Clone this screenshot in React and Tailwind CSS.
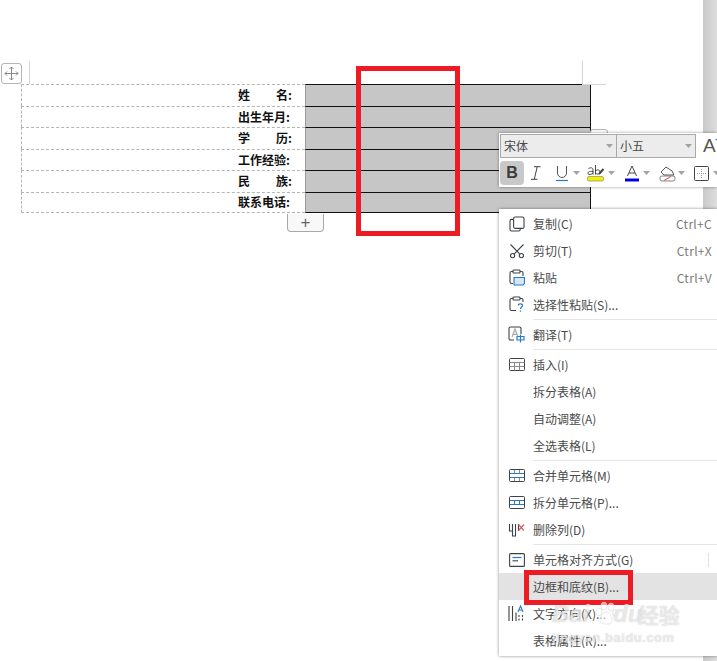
const cjk = "font-['Noto_Sans_CJK_SC','Noto_Sans',sans-serif]"

const rows = [
  ['姓', '名:', true],
  ['出生年月:', '', false],
  ['学', '历:', true],
  ['工作经验:', '', false],
  ['民', '族:', true],
  ['联系电话:', '', false],
]

const ICON = { fill: 'none', stroke: '#3d4248', strokeWidth: 1.1 }

function Arrow() {
  return (
    <svg width="7" height="4" viewBox="0 0 7 4" className="shrink-0">
      <path d="M0 0h7L3.5 4z" fill="#a3a3a3" />
    </svg>
  )
}

function CopyIcon() {
  return (
    <svg width="16" height="16" viewBox="0 0 16 16" {...ICON}>
      <rect x="4.6" y="1" width="10.4" height="11.4" rx="1.5" />
      <path d="M4.6 3.4H2.5A1.5 1.5 0 0 0 1 4.9v8.6A1.5 1.5 0 0 0 2.5 15h7.2a1.5 1.5 0 0 0 1.5-1.5v-1.1" />
    </svg>
  )
}

function CutIcon() {
  return (
    <svg width="16" height="16" viewBox="0 0 16 16" {...ICON}>
      <path d="M1.5 1.500l9.200 9.400M14.500 1.500L5.300 10.900" />
      <circle cx="3.600" cy="12.600" r="2.100" />
      <circle cx="12.400" cy="12.600" r="2.100" />
    </svg>
  )
}

function PasteIcon() {
  return (
    <svg width="16" height="17" viewBox="0 0 16 17">
      <path d="M4 2.500H2.500A1.500 1.500 0 0 0 1 4v9a1.500 1.500 0 0 0 1.500 1.500H4M11 2.500h1.500A1.500 1.500 0 0 1 14 4v3" {...ICON} />
      <rect x="4" y="1" width="7" height="3" rx="0.800" {...ICON} />
      <path d="M5 8.500h10.500v6l-1.500 1.500H5z" fill="#d5e5f7" stroke="#2a78c8" strokeWidth="1.100" />
    </svg>
  )
}

function PasteSpecialIcon() {
  return (
    <svg width="16" height="17" viewBox="0 0 16 17">
      <path d="M4 2.500H2.500A1.500 1.500 0 0 0 1 4v9a1.500 1.500 0 0 0 1.500 1.500H7M11 2.500h1.500A1.500 1.500 0 0 1 14 4v2" {...ICON} />
      <rect x="4" y="1" width="7" height="3" rx="0.800" {...ICON} />
      <path d="M9.300 9.600c0-2.400 4.200-2.400 4.200 0 0 1.600-2.100 1.600-2.100 3.400M11.400 14.400v1.400" fill="none" stroke="#2a78c8" strokeWidth="1.200" />
    </svg>
  )
}

function TranslateIcon() {
  return (
    <svg width="17" height="17" viewBox="0 0 17 17">
      <path d="M6 14H2.500A1.500 1.500 0 0 1 1 12.500v-10A1.500 1.500 0 0 1 2.500 1h9A1.500 1.500 0 0 1 13 2.500V8" {...ICON} />
      <path d="M4 11l3-8 3 8M5.100 8.400h3.800" fill="none" stroke="#a8a8a8" strokeWidth="1.200" />
      <path d="M9 10.500h7v3.500H9zM12.500 8.600V16.600" fill="none" stroke="#2a78c8" strokeWidth="1.200" />
    </svg>
  )
}

function TableIcon() {
  return (
    <svg width="16" height="13" viewBox="0 0 16 13" fill="none" stroke="#3d4248" strokeWidth="1">
      <rect x="0.500" y="0.500" width="15" height="12" rx="1" />
      <path d="M.5 4.500h15M.5 8.500h15M5.500 4.500v8M10.500 4.500v8" stroke="#8a8a8a" />
    </svg>
  )
}

function MergeIcon() {
  return (
    <svg width="16" height="13" viewBox="0 0 16 13" fill="none" stroke="#3d4248" strokeWidth="1">
      <path d="M5.500 .5V4M10.500 .5V4M5.500 9v3.500M10.500 9v3.500" stroke="#8a8a8a" />
      <path d="M.5 4.500h15M.5 8.500h15" stroke="#2a78c8" strokeWidth="1.200" />
      <rect x="0.500" y="0.500" width="15" height="12" rx="1" />
    </svg>
  )
}

function SplitIcon() {
  return (
    <svg width="16" height="13" viewBox="0 0 16 13" fill="none" stroke="#3d4248" strokeWidth="1">
      <path d="M5.500 4.500v4M10.500 4.500v4" stroke="#2a78c8" />
      <path d="M.5 4.500h15M.5 8.500h15" stroke="#2a78c8" strokeWidth="1.200" />
      <rect x="0.500" y="0.500" width="15" height="12" rx="1" />
    </svg>
  )
}

function DeleteColIcon() {
  return (
    <svg width="17" height="14" viewBox="0 0 17 14" fill="none">
      <path d="M1.500 1v7h3M4.500 1v12h3V1M10.500 1v7" stroke="#3d4248" strokeWidth="1.100" />
      <path d="M10.500 1.500l5.500 6M16 1.500l-5.500 6" stroke="#d9626b" strokeWidth="1.300" />
    </svg>
  )
}

function AlignIcon() {
  return (
    <svg width="16" height="14" viewBox="0 0 16 14" fill="none">
      <rect x="0.600" y="0.600" width="14.800" height="12.800" rx="1" stroke="#3d4248" strokeWidth="1.100" />
      <path d="M3.500 4.500h9" stroke="#2a78c8" strokeWidth="1.200" />
      <path d="M3.500 7.800h5.500" stroke="#3d4248" strokeWidth="1.100" />
    </svg>
  )
}

function TextDirIcon() {
  return (
    <svg width="17" height="17" viewBox="0 0 17 17" fill="none">
      <path d="M1 1v15M4.500 1v15M8 7.500V16" stroke="#3d4248" strokeWidth="1.100" />
      <path d="M10 7l2.500-6L15 7M10.900 5h3.200" stroke="#2a78c8" strokeWidth="1.100" />
      <path d="M11 10v6M14.500 10v6" stroke="#3d4248" strokeWidth="1.100" strokeDasharray="2 1.400" />
    </svg>
  )
}

function MenuItem({ icon, label, shortcut, active, divider }) {
  return (
    <div className={`flex h-[27px] items-center ${active ? 'bg-[#e3e3e3]' : ''}`}>
      <div className="flex w-[34px] shrink-0 justify-center pl-[1px]">{icon}</div>
      <span className="flex-1 whitespace-nowrap text-[12px] text-[#4a4a4a]">{label}</span>
      {shortcut && <span className="pr-[5px] text-[12px] tracking-[0.3px] text-[#7b7b7b]">{shortcut}</span>}
      {divider && <span className="mr-[8px] h-[14px] w-px bg-[#e2e2e2]" />}
    </div>
  )
}

function Sep() {
  return (
    <div className="flex h-[3px] items-center pl-[34px]">
      <div className="h-px w-full bg-[#e6e6e6]" />
    </div>
  )
}

function Toolbar() {
  return (
    <div className={`absolute left-[499px] top-[133px] h-[54px] w-[218px] overflow-hidden bg-white pl-[1px] pt-[1px] shadow-[0_0_3px_rgba(0,0,0,0.4)] ${cjk}`}>
      <div className="flex h-[24px] items-stretch">
        <div className="flex w-[117px] items-center justify-between border border-[#a9a9a9] bg-[#ececec] pl-[3px] pr-[3px] text-[12px] text-[#4a4a4a]">
          <span>宋体</span>
          <Arrow />
        </div>
        <div className="flex w-[79px] items-center justify-between border border-l-0 border-[#a9a9a9] bg-[#ececec] pl-[3px] pr-[3px] text-[12px] text-[#4a4a4a]">
          <span>小五</span>
          <Arrow />
        </div>
        <div className="relative ml-[7px] font-['Liberation_Sans',sans-serif] text-[19px] leading-[24px] text-[#555]">
          A<span className="absolute left-[12px] top-[-6px] text-[12px] font-bold text-[#2a78c8]">+</span>
        </div>
      </div>
      <div className="mt-[3px] flex h-[24px] items-center">
        <div className="flex h-[24px] w-[24px] shrink-0 items-center justify-center rounded-[4px] bg-[#c8c8c8] font-['Liberation_Sans',sans-serif] text-[16px] font-bold text-[#3b3b3b]">B</div>
        <svg width="12" height="14" viewBox="0 0 12 14" className="ml-[6px] shrink-0" fill="none" stroke="#444" strokeWidth="1">
          <path d="M4 .7h6.500M1 13.300h6.500M7.200.7L4.300 13.300" />
        </svg>
        <svg width="14" height="17" viewBox="0 0 14 17" className="ml-[13px] shrink-0" fill="none">
          <path d="M2.500 1v7a4.500 4.500 0 0 0 9 0V1" stroke="#555" strokeWidth="1" />
          <path d="M1 15.500h12" stroke="#2a78c8" strokeWidth="1.200" />
        </svg>
        <div className="ml-[4px]"><Arrow /></div>
        <svg width="18" height="17" viewBox="0 0 18 17" className="ml-[7px] shrink-0" fill="none">
          <path d="M1.500 3.500c3-1.500 4.500-.5 4.500 1.500v4.500M6 6.500c-4-.5-5 .5-5 1.800 0 1.600 3 1.800 5-.3M8.500 0v9.500M8.500 6c2-2 4.500-1 4.500 1S10.500 10 8.500 8" stroke="#444" strokeWidth="1" />
          <path d="M12 9l4.500-5" stroke="#444" strokeWidth="2" />
          <rect x="0.500" y="11.500" width="16" height="4.500" rx="1.500" fill="#f5f000" stroke="#8a8a6a" strokeWidth="0.700" />
        </svg>
        <div className="ml-[3px]"><Arrow /></div>
        <svg width="14" height="17" viewBox="0 0 14 17" className="ml-[10px] shrink-0" fill="none">
          <path d="M2.500 11L7 1l4.500 10M4 8h6" stroke="#444" strokeWidth="1" />
          <path d="M0 15h14" stroke="#0000e6" strokeWidth="3" />
        </svg>
        <div className="ml-[4px]"><Arrow /></div>
        <svg width="17" height="17" viewBox="0 0 17 17" className="ml-[9px] shrink-0" fill="none">
          <path d="M2 7l5-5 6 4 2 4H5z" stroke="#555" strokeWidth="1" />
          <rect x="1" y="11" width="15" height="5" rx="2" stroke="#777" strokeWidth="0.900" />
          <path d="M5 15.500l7-4" stroke="#e0464e" strokeWidth="1" />
        </svg>
        <div className="ml-[2px]"><Arrow /></div>
        <svg width="15" height="15" viewBox="0 0 15 15" className="ml-[9px] shrink-0" fill="none">
          <rect x="0.500" y="0.500" width="14" height="14" rx="1" stroke="#444" />
          <path d="M7.500 3v9M3 7.500h9" stroke="#999" strokeDasharray="1 1" />
        </svg>
        <div className="ml-[4px]"><Arrow /></div>
      </div>
    </div>
  )
}

function ContextMenu() {
  return (
    <div className={`absolute left-[499px] top-[209px] h-[447px] w-[218px] bg-white pt-[1px] shadow-[0_0_3px_rgba(0,0,0,0.45)] ${cjk}`}>
      <MenuItem icon={<CopyIcon />} label="复制(C)" shortcut="Ctrl+C" />
      <MenuItem icon={<CutIcon />} label="剪切(T)" shortcut="Ctrl+X" />
      <MenuItem icon={<PasteIcon />} label="粘贴" shortcut="Ctrl+V" />
      <MenuItem icon={<PasteSpecialIcon />} label="选择性粘贴(S)..." />
      <Sep />
      <MenuItem icon={<TranslateIcon />} label="翻译(T)" />
      <Sep />
      <MenuItem icon={<TableIcon />} label="插入(I)" />
      <MenuItem label="拆分表格(A)" />
      <MenuItem label="自动调整(A)" />
      <MenuItem label="全选表格(L)" />
      <Sep />
      <MenuItem icon={<MergeIcon />} label="合并单元格(M)" />
      <MenuItem icon={<SplitIcon />} label="拆分单元格(P)..." />
      <MenuItem icon={<DeleteColIcon />} label="删除列(D)" />
      <Sep />
      <MenuItem icon={<AlignIcon />} label="单元格对齐方式(G)" divider />
      <MenuItem label="边框和底纹(B)..." active />
      <MenuItem icon={<TextDirIcon />} label="文字方向(X)..." />
      <MenuItem label="表格属性(R)..." />
    </div>
  )
}

function Watermark() {
  return (
    <div className="pointer-events-none absolute left-[552px] top-[598px] select-none whitespace-nowrap text-white/60 [text-shadow:0_0_1px_rgba(150,150,150,0.55)]">
      <div className="flex h-[32px] items-center">
        <span className="font-['Liberation_Sans',sans-serif] text-[24px] font-bold italic leading-[32px]">Bai</span>
        <svg width="24" height="26" viewBox="0 0 24 26" className="ml-[5px] shrink-0" fill="#ffffff" fillOpacity="0.6" stroke="#d8d8d8" strokeWidth="0.600">
          <ellipse cx="5" cy="11" rx="3" ry="4" />
          <ellipse cx="10" cy="5" rx="3" ry="4" />
          <ellipse cx="17" cy="6" rx="3" ry="4" />
          <ellipse cx="21" cy="12" rx="2.500" ry="3.500" />
          <path d="M12 11c4 0 8 8 5 11-2 2-7 1-10 0-3-3 1-11 5-11z" />
        </svg>
        <span className="-ml-[5px] font-['Liberation_Sans',sans-serif] text-[24px] font-bold italic leading-[32px]">du</span>
        <span className={`-ml-[5px] text-[21px] font-bold leading-[32px] ${cjk}`}>经验</span>
      </div>
      <div className="font-['Liberation_Sans',sans-serif] text-[13px] font-bold leading-[16px] tracking-[0.5px]">
        jingyan.baidu.com
      </div>
    </div>
  )
}

export default function App() {
  return (
    <div className="relative flex h-[661px] w-[717px] overflow-hidden bg-white">
      <div className="flex-1 pl-[21px] pt-[84px]">
        <div className="w-[570px]">
          {rows.map(([a, b, spread], i) => (
            <div key={i} className="flex h-[21.5px]">
              <div className={`flex w-[284px] items-center justify-end border-l border-t border-dashed border-[#b5b5b5] pr-[13px] ${i === 5 ? 'border-b' : ''}`}>
                <div className={`flex w-[54px] justify-between whitespace-nowrap text-[12px] font-bold text-[#111] ${cjk}`}>
                  {spread ? <><span>{a}</span><span>{b}</span></> : <span>{a}</span>}
                </div>
              </div>
              <div className={`flex-1 border-l border-r border-t border-l-[#9a9a9a] border-r-[#111] border-t-[#111] bg-[#c6c6c6] ${i === 5 ? 'border-b border-b-[#111]' : ''}`} />
            </div>
          ))}
        </div>
        <div className="ml-[266px] mt-[1px] flex h-[18px] w-[37px] items-center justify-center rounded-b-[4px] border border-t-0 border-[#a9a9a9] bg-[#f8f8f8] font-['Liberation_Sans',sans-serif] text-[17px] leading-none text-[#666]">
          +
        </div>
      </div>
      <div className="w-[14px] bg-gradient-to-r from-[#c9c9c9] to-[#dedede]" />

      {/* crop marks and table handles */}
      <div className="absolute left-[29px] top-[61px] h-[23px] w-px bg-[#d5d5d5]" />
      <div className="absolute left-[582px] top-[61px] h-[23px] w-px bg-[#d5d5d5]" />
      <div className="absolute left-[582px] top-[84px] h-px w-[24px] bg-[#d5d5d5]" />
      <div className="absolute left-[1px] top-[63px] flex h-[21px] w-[21px] items-center justify-center rounded-[3px] border border-[#b5b5b5] bg-white">
        <svg width="15" height="15" viewBox="0 0 15 15" fill="none" stroke="#888" strokeWidth="1">
          <path d="M7.500 1v13M1 7.500h13M5.500 3l2-2 2 2M5.500 12l2 2 2-2M3 5.500l-2 2 2 2M12 5.500l2 2-2 2" />
        </svg>
      </div>
      <div className="absolute left-[590px] top-[129px] h-[6px] w-[18px] rounded-t-[3px] border border-[#b5b5b5] bg-white" />

      <div className="absolute left-[356px] top-[66px] h-[170px] w-[104px] border-[5px] border-[#ed1c24]" />
      <Toolbar />
      <ContextMenu />
      <div className="absolute left-[524px] top-[570px] h-[35px] w-[109px] border-[5px] border-[#ed1c24]" />
      <Watermark />
    </div>
  )
}
